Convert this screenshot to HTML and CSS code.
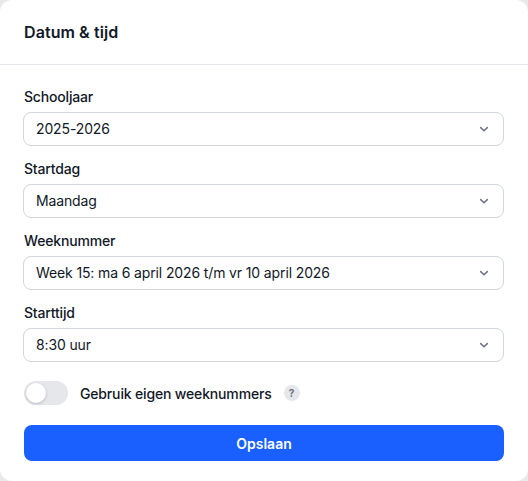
FILE: index.html
```html
<!DOCTYPE html>
<html lang="nl">
<head>
  <meta charset="UTF-8" />
  <meta name="viewport" content="width=device-width, initial-scale=1.0" />
  <title>Datum &amp; tijd</title>
  <link rel="stylesheet" href="styles.css">
</head>
<body>
  <div class="card">
    <h2 class="card-title">Datum &amp; tijd</h2>
    <form class="card-body">
      <div class="field">
        <label class="field-label">Schooljaar</label>
        <div class="select">
          <span>2025-2026</span>
          <svg class="chevron" viewBox="0 0 12 12"><path d="M2.7 4.6 6 7.8l3.3-3.2"/></svg>
        </div>
      </div>
      <div class="field">
        <label class="field-label">Startdag</label>
        <div class="select">
          <span>Maandag</span>
          <svg class="chevron" viewBox="0 0 12 12"><path d="M2.7 4.6 6 7.8l3.3-3.2"/></svg>
        </div>
      </div>
      <div class="field">
        <label class="field-label">Weeknummer</label>
        <div class="select">
          <span>Week 15: ma 6 april 2026 t/m vr 10 april 2026</span>
          <svg class="chevron" viewBox="0 0 12 12"><path d="M2.7 4.6 6 7.8l3.3-3.2"/></svg>
        </div>
      </div>
      <div class="field">
        <label class="field-label">Starttijd</label>
        <div class="select">
          <span>8:30 uur</span>
          <svg class="chevron" viewBox="0 0 12 12"><path d="M2.7 4.6 6 7.8l3.3-3.2"/></svg>
        </div>
      </div>
      <div class="toggle-row">
        <div class="toggle"><div class="toggle-knob"></div></div>
        <span class="toggle-label">Gebruik eigen weeknummers</span>
        <span class="help">?</span>
      </div>
      <button type="button" class="save-button">Opslaan</button>
    </form>
  </div>
</body>
</html>
```

FILE: styles.css
```css
html, body {
  margin: 0;
  padding: 0;
  height: 100%;
  background: #e9e9ec;
  font-family: Inter, sans-serif;
  color: #111827;
}
.card {
  height: 481px;
  box-sizing: border-box;
  background: #fff;
  border-radius: 12px;
}
.card-title {
  margin: 0;
  height: 65px;
  box-sizing: border-box;
  padding-left: 24px;
  border-bottom: 1px solid #e4e6eb;
  font-size: 16px;
  font-weight: 600;
  letter-spacing: 0.08px;
  line-height: 64px;
}
.card-body {
  display: flex;
  flex-direction: column;
  padding: 22px 24px 0;
}
.field {
  margin-bottom: 13px;
}
.field-label {
  display: block;
  margin-bottom: 5px;
  font-size: 14px;
  font-weight: 500;
  letter-spacing: -0.18px;
  line-height: 20px;
}
.select {
  display: flex;
  align-items: center;
  justify-content: space-between;
  height: 34px;
  margin-left: -1px;
  box-sizing: border-box;
  padding: 0 13px 0 12px;
  border: 1px solid #d2d6de;
  border-radius: 8px;
  font-size: 14px;
  letter-spacing: -0.13px;
  line-height: 20px;
}
.chevron {
  width: 12px;
  height: 12px;
  fill: none;
  stroke: #6b7280;
  stroke-width: 1.5;
  stroke-linecap: round;
  stroke-linejoin: round;
}
.toggle-row {
  display: flex;
  align-items: center;
  margin-top: 6px;
  height: 24px;
}
.toggle {
  width: 44px;
  height: 24px;
  padding: 2px;
  box-sizing: border-box;
  background: #e5e7eb;
  border-radius: 12px;
}
.toggle-knob {
  width: 20px;
  height: 20px;
  background: #fff;
  border-radius: 50%;
  box-shadow: 0 1px 3px rgba(0,0,0,0.2);
}
.toggle-label {
  margin-left: 12px;
  font-size: 14px;
  font-weight: 500;
  letter-spacing: -0.16px;
}
.help {
  width: 16px;
  height: 16px;
  margin-left: 12px;
  background: #e5e7eb;
  border-radius: 50%;
  color: #6b7280;
  font-size: 10px;
  font-weight: 700;
  line-height: 16px;
  text-align: center;
}
.save-button {
  height: 36px;
  margin-top: 20px;
  padding: 0;
  border: none;
  border-radius: 8px;
  background: #1a5fff;
  color: #fff;
  font-family: Inter, sans-serif;
  font-size: 14px;
  font-weight: 600;
}
```
